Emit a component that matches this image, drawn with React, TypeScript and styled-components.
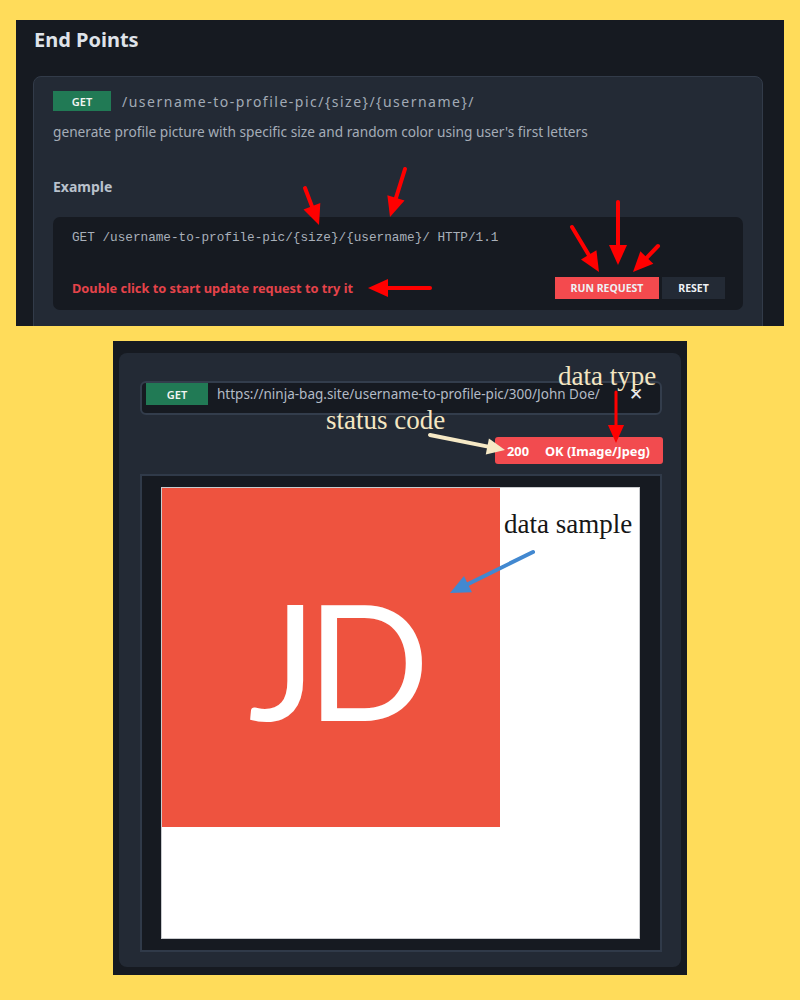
import React from "react";
import styled, { createGlobalStyle } from "styled-components";

const Global = createGlobalStyle`
  html, body { margin: 0; padding: 0; }
  body { background: #ffdc5a; font-family: "Noto Sans", sans-serif; }
`;

const Page = styled.div`
  width: 800px;
  height: 1000px;
  background: #ffdc5a;
  display: flex;
  flex-direction: column;
  padding-top: 20px;
  box-sizing: border-box;
`;

const TopPanel = styled.section`
  position: relative;
  margin-left: 16px;
  width: 768px;
  height: 306px;
  background: #161a21;
  overflow: hidden;
  box-sizing: border-box;
  padding: 8px 21px 0 17px;
`;

const Title = styled.h1`
  margin: 0 0 0 1px;
  font-size: 20px;
  line-height: 24px;
  font-weight: 700;
  color: #dfe3e9;
`;

const Card = styled.div`
  margin-top: 24px;
  background: #232a35;
  border: 1px solid #323b49;
  border-radius: 8px;
  padding: 14px 19px 40px;
  display: flex;
  flex-direction: column;
`;

const Row = styled.div`
  display: flex;
  align-items: center;
  gap: 11px;
`;

const Badge = styled.span<{ $w: number; $h: number }>`
  display: inline-flex;
  align-items: center;
  justify-content: center;
  width: ${(p) => p.$w}px;
  height: ${(p) => p.$h}px;
  background: #217a55;
  color: #f2f5f3;
  font-size: 11px;
  font-weight: 600;
  flex-shrink: 0;
`;

const PathText = styled.span`
  font-size: 14px;
  letter-spacing: 1.5px;
  color: #a2aab5;
`;

const Desc = styled.p`
  margin: 12px 0 0;
  font-size: 13.7px;
  line-height: 18px;
  color: #a5adb8;
`;

const SubTitle = styled.h2`
  margin: 37px 0 0;
  font-size: 14px;
  line-height: 18px;
  font-weight: 700;
  color: #b9c1cc;
`;

const CodeBlock = styled.div`
  margin-top: 21px;
  background: #161a21;
  border-radius: 7px;
  height: 93px;
  box-sizing: border-box;
  padding: 12px 18px 11px 19px;
  display: flex;
  flex-direction: column;
  justify-content: space-between;
`;

const Code = styled.code`
  font-family: "Liberation Mono", monospace;
  font-size: 12.7px;
  line-height: 18px;
  color: #a9b0ba;
`;

const ActionRow = styled.div`
  display: flex;
  align-items: center;
  justify-content: space-between;
`;

const Hint = styled.span`
  font-size: 12.8px;
  font-weight: 700;
  color: #e5434a;
`;

const Buttons = styled.div`
  display: flex;
  gap: 3px;
`;

const Btn = styled.button<{ $primary?: boolean }>`
  height: 22px;
  width: ${(p) => (p.$primary ? 104 : 63)}px;
  border: none;
  padding: 0;
  background: ${(p) => (p.$primary ? "#f44a4e" : "#232a35")};
  color: #eef1f4;
  font-family: "Noto Sans", sans-serif;
  font-size: 10.5px;
  font-weight: 700;
`;

const BottomPanel = styled.section`
  position: relative;
  margin: 15px 0 0 113px;
  width: 574px;
  height: 634px;
  background: #161a21;
  box-sizing: border-box;
  padding: 12px 6px 8px;
  display: flex;
`;

const Modal = styled.div`
  flex: 1;
  background: #232a35;
  border-radius: 8px;
  padding: 28px 19px 15px 21px;
  display: flex;
  flex-direction: column;
`;

const UrlBar = styled.div`
  height: 34px;
  box-sizing: border-box;
  border: 2px solid #333d4c;
  border-radius: 6px;
  background: #161a21;
  display: flex;
  align-items: flex-start;
  padding: 0 17px 0 4px;
  gap: 9px;
`;

const UrlText = styled.span`
  flex: 1;
  font-size: 13.5px;
  line-height: 22px;
  color: #b3bbc6;
  white-space: nowrap;
`;

const Close = styled.span`
  font-size: 17px;
  line-height: 22px;
  color: #e8ebef;
`;

const StatusRow = styled.div`
  display: flex;
  justify-content: flex-end;
  margin-top: 22px;
`;

const Status = styled.span`
  height: 27px;
  width: 168px;
  margin-right: -1px;
  background: #f24b4f;
  border-radius: 3px;
  color: #fff;
  font-size: 12.8px;
  font-weight: 700;
  display: flex;
  align-items: center;
  padding-left: 12px;
  gap: 16px;
  box-sizing: border-box;
`;

const Frame = styled.div`
  margin-top: 10px;
  flex: 1;
  border: 2px solid #303a49;
  background: #161a21;
  padding: 11px 20px 11px 19px;
  display: flex;
`;

const Picture = styled.div`
  flex: 1;
  background: #fff;
  border: 1px solid #c9cbce;
  display: flex;
  align-items: flex-start;
`;

const Avatar = styled.div`
  width: 338px;
  height: 339px;
  background: #ee533f;
  display: flex;
  align-items: center;
  justify-content: center;
  color: #fff;
  font-family: "Lato", sans-serif;
  font-weight: 400;
  font-size: 162px;
  letter-spacing: -10px;
  line-height: 1;
  padding: 2px 0 0 6px;
  box-sizing: border-box;
`;

const Overlay = styled.svg`
  position: absolute;
  left: 0;
  top: 0;
  pointer-events: none;
  overflow: visible;
`;

const Note = styled.span<{ $x: number; $y: number; $dark?: boolean }>`
  position: absolute;
  left: ${(p) => p.$x}px;
  top: ${(p) => p.$y}px;
  font-family: "Liberation Serif", serif;
  font-size: 27px;
  line-height: 30px;
  color: ${(p) => (p.$dark ? "#161616" : "#f4e6c2")};
  white-space: nowrap;
`;

type ArrowProps = { x1: number; y1: number; x2: number; y2: number; color: string; w?: number; head?: number };

const Arrow = ({ x1, y1, x2, y2, color, w = 4, head = 20 }: ArrowProps) => {
  const dx = x2 - x1;
  const dy = y2 - y1;
  const len = Math.hypot(dx, dy);
  const ux = dx / len;
  const uy = dy / len;
  const bx = x2 - ux * head;
  const by = y2 - uy * head;
  const hw = head * 0.45;
  const px = -uy * hw;
  const py = ux * hw;
  return (
    <g>
      <line x1={x1} y1={y1} x2={bx + ux * 2} y2={by + uy * 2} stroke={color} strokeWidth={w} strokeLinecap="round" />
      <polygon points={`${x2},${y2} ${bx + px},${by + py} ${bx - px},${by - py}`} fill={color} />
    </g>
  );
};

export default function App() {
  return (
    <>
      <Global />
      <Page>
        <TopPanel>
          <Title>End Points</Title>
          <Card>
            <Row>
              <Badge $w={58} $h={20}>GET</Badge>
              <PathText>/username-to-profile-pic/{"{size}"}/{"{username}"}/</PathText>
            </Row>
            <Desc>generate profile picture with specific size and random color using user's first letters</Desc>
            <SubTitle>Example</SubTitle>
            <CodeBlock>
              <Code>GET /username-to-profile-pic/{"{size}"}/{"{username}"}/ HTTP/1.1</Code>
              <ActionRow>
                <Hint>Double click to start update request to try it</Hint>
                <Buttons>
                  <Btn $primary>RUN REQUEST</Btn>
                  <Btn>RESET</Btn>
                </Buttons>
              </ActionRow>
            </CodeBlock>
          </Card>
          <Overlay width="768" height="306">
            <Arrow x1={289} y1={168} x2={303} y2={205} color="#ff0000" />
            <Arrow x1={389} y1={149} x2={374} y2={197} color="#ff0000" />
            <Arrow x1={414} y1={268} x2={352} y2={268} color="#ff0000" />
            <Arrow x1={556} y1={207} x2={583} y2={252} color="#ff0000" />
            <Arrow x1={602} y1={182} x2={602} y2={245} color="#ff0000" />
            <Arrow x1={642} y1={226} x2={617} y2={252} color="#ff0000" />
          </Overlay>
        </TopPanel>
        <BottomPanel>
          <Modal>
            <UrlBar>
              <Badge $w={62} $h={22}>GET</Badge>
              <UrlText>https://ninja-bag.site/username-to-profile-pic/300/John Doe/</UrlText>
              <Close>✕</Close>
            </UrlBar>
            <StatusRow>
              <Status>
                <span>200</span>
                <span>OK (Image/Jpeg)</span>
              </Status>
            </StatusRow>
            <Frame>
              <Picture>
                <Avatar>JD</Avatar>
              </Picture>
            </Frame>
          </Modal>
          <Note $x={445} $y={20}>data type</Note>
          <Note $x={213} $y={64}>status code</Note>
          <Note $x={391} $y={168} $dark>data sample</Note>
          <Overlay width="574" height="634">
            <Arrow x1={317} y1={94} x2={392} y2={109} color="#f6e9c6" w={4} head={18} />
            <Arrow x1={503} y1={51} x2={503} y2={102} color="#ff0000" w={3} head={18} />
            <Arrow x1={420} y1={211} x2={337} y2={252} color="#4288d0" w={4} head={20} />
          </Overlay>
        </BottomPanel>
      </Page>
    </>
  );
}
